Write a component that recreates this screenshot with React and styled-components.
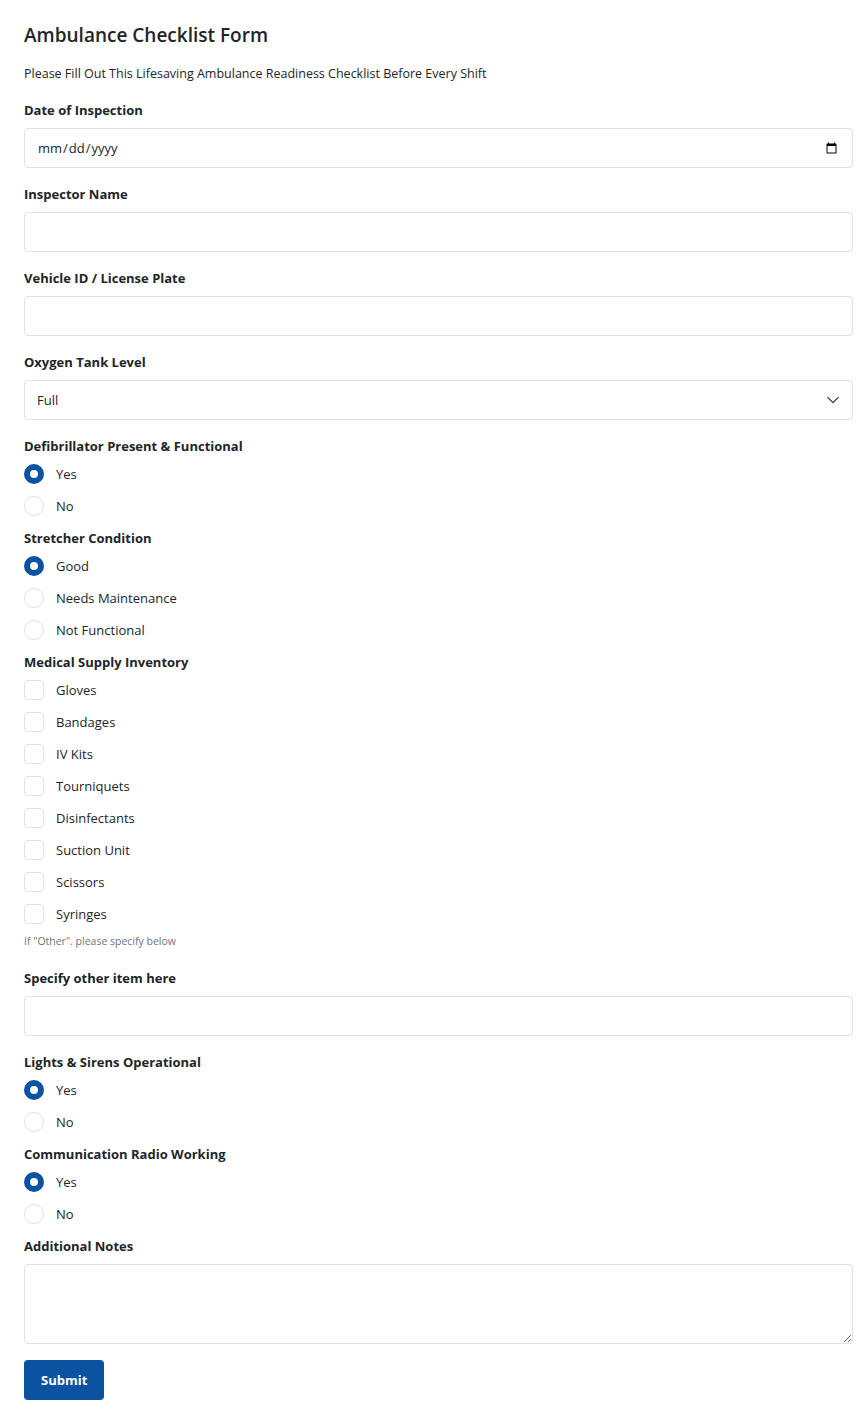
import styled, { createGlobalStyle } from 'styled-components';

const Global = createGlobalStyle`
  body { margin: 0; background: #fff; font-family: "Open Sans", "Noto Sans", sans-serif; color: #212529; }
  * { box-sizing: border-box; }
`;

const Page = styled.form`
  padding: 22px 13px 18px 24px;
`;

const Title = styled.h1`
  font-size: 19px;
  font-weight: 600;
  margin: 0 0 16px;
  line-height: 26px;
`;

const Sub = styled.p`
  font-size: 12.5px;
  margin: 0 0 16px;
  line-height: 20px;
`;

const Label = styled.div`
  font-size: 13px;
  font-weight: 700;
  line-height: 20px;
  margin-bottom: ${p => (p.$group ? '2px' : '8px')};
`;

const Field = styled.div`
  margin-bottom: ${p => (p.$tight ? '6px' : '16px')};
`;

const Input = styled.input`
  width: 100%;
  height: 40px;
  border: 1px solid #dee2e6;
  border-radius: 4px;
  padding: 0 12px;
  font: inherit;
  font-size: 13px;
  color: #212529;
`;

const Select = styled.div`
  height: 40px;
  border: 1px solid #dee2e6;
  border-radius: 4px;
  padding: 0 12px;
  font-size: 13px;
  display: flex;
  align-items: center;
  justify-content: space-between;
`;

const TextArea = styled.textarea`
  width: 100%;
  height: 80px;
  border: 1px solid #dee2e6;
  border-radius: 4px;
  display: block;
  font: inherit;
`;

const Option = styled.label`
  display: flex;
  align-items: center;
  gap: 12px;
  height: 32px;
  font-size: 13px;
`;

const Radio = styled.span`
  width: 20px;
  height: 20px;
  border-radius: 50%;
  border: ${p => (p.$on ? '6px solid #0b52a0' : '1px solid #dee2e6')};
  background: #fff;
`;

const Box = styled.span`
  width: 20px;
  height: 20px;
  border-radius: 4px;
  border: 1px solid #dee2e6;
`;

const Hint = styled.div`
  font-size: 10.5px;
  color: #6c757d;
  line-height: 14px;
  margin: 4px 0 20px;
`;

const Button = styled.button`
  background: #0b52a0;
  color: #fff;
  border: none;
  border-radius: 4px;
  height: 40px;
  padding: 0 17px;
  font: inherit;
  font-size: 13px;
  font-weight: 700;
`;

const RadioGroup = ({ label, options, on = 0 }) => (
  <Field $tight>
    <Label $group>{label}</Label>
    {options.map((o, i) => (
      <Option key={o}><Radio $on={i === on} />{o}</Option>
    ))}
  </Field>
);

const supplies = ['Gloves', 'Bandages', 'IV Kits', 'Tourniquets', 'Disinfectants', 'Suction Unit', 'Scissors', 'Syringes'];

export default function App() {
  return (
    <Page>
      <Global />
      <Title>Ambulance Checklist Form</Title>
      <Sub>Please Fill Out This Lifesaving Ambulance Readiness Checklist Before Every Shift</Sub>
      <Field>
        <Label>Date of Inspection</Label>
        <Input type="date" />
      </Field>
      <Field>
        <Label>Inspector Name</Label>
        <Input />
      </Field>
      <Field>
        <Label>Vehicle ID / License Plate</Label>
        <Input />
      </Field>
      <Field>
        <Label>Oxygen Tank Level</Label>
        <Select>
          Full
          <svg width="14" height="14" viewBox="0 0 16 16" fill="none" stroke="#343a40" strokeWidth="1.5" strokeLinecap="round" strokeLinejoin="round"><path d="M2 5l6 6 6-6" /></svg>
        </Select>
      </Field>
      <RadioGroup label="Defibrillator Present & Functional" options={['Yes', 'No']} />
      <RadioGroup label="Stretcher Condition" options={['Good', 'Needs Maintenance', 'Not Functional']} />
      <div>
        <Label $group>Medical Supply Inventory</Label>
        {supplies.map(s => (
          <Option key={s}><Box />{s}</Option>
        ))}
        <Hint>If "Other". please specify below</Hint>
      </div>
      <Field>
        <Label>Specify other item here</Label>
        <Input />
      </Field>
      <RadioGroup label="Lights & Sirens Operational" options={['Yes', 'No']} />
      <RadioGroup label="Communication Radio Working" options={['Yes', 'No']} />
      <Field>
        <Label>Additional Notes</Label>
        <TextArea />
      </Field>
      <Button type="button">Submit</Button>
    </Page>
  );
}
